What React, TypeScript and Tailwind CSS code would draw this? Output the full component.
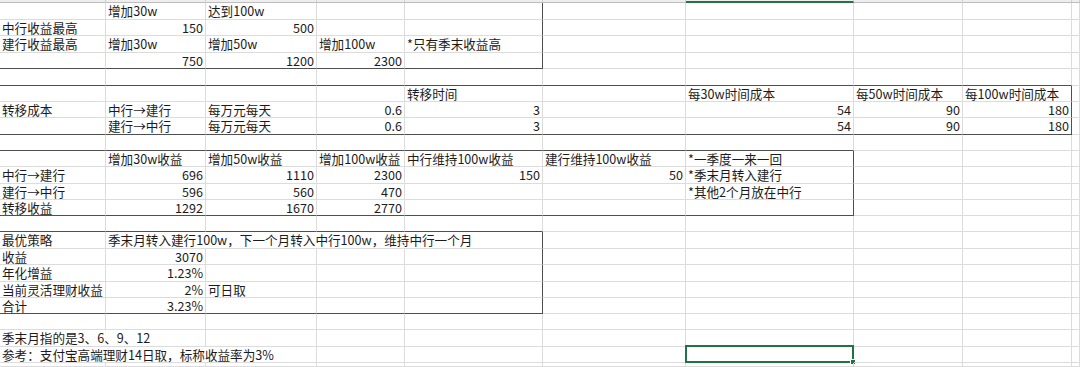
type Cell = { t?: string; r?: boolean; span?: number; sel?: boolean }

const font = { fontFamily: '"Noto Sans CJK SC", "Liberation Sans", sans-serif' }

const colW = [106, 100, 111, 88, 138, 143, 168, 109, 109, 8]

const L = (t: string): Cell => ({ t })
const R = (t: string): Cell => ({ t, r: true })
const E: Cell = {}

// rows 1..23 of the sheet, header strip is drawn separately
const rows: Cell[][] = [
  [E, L('增加30w'), L('达到100w')],
  [L('中行收益最高'), R('150'), R('500')],
  [L('建行收益最高'), L('增加30w'), L('增加50w'), L('增加100w'), L('*只有季末收益高')],
  [E, R('750'), R('1200'), R('2300')],
  [],
  [E, E, E, E, L('转移时间'), E, L('每30w时间成本'), L('每50w时间成本'), L('每100w时间成本')],
  [L('转移成本'), L('中行→建行'), L('每万元每天'), R('0.6'), R('3'), E, R('54'), R('90'), R('180')],
  [E, L('建行→中行'), L('每万元每天'), R('0.6'), R('3'), E, R('54'), R('90'), R('180')],
  [],
  [E, L('增加30w收益'), L('增加50w收益'), L('增加100w收益'), L('中行维持100w收益'), L('建行维持100w收益'), L('*一季度一来一回')],
  [L('中行→建行'), R('696'), R('1110'), R('2300'), R('150'), R('50'), L('*季末月转入建行')],
  [L('建行→中行'), R('596'), R('560'), R('470'), E, E, L('*其他2个月放在中行')],
  [L('转移收益'), R('1292'), R('1670'), R('2770')],
  [],
  [L('最优策略'), { t: '季末月转入建行100w，下一个月转入中行100w，维持中行一个月', span: 4 }],
  [L('收益'), R('3070')],
  [L('年化增益'), R('1.23%')],
  [L('当前灵活理财收益'), R('2%'), L('可日取')],
  [L('合计'), R('3.23%')],
  [],
  [{ t: '季末月指的是3、6、9、12', span: 2 }],
  [{ t: '参考：支付宝高端理财14日取，标称收益率为3%', span: 3 }, E, E, E, { sel: true }],
  [],
]

const spanCls: Record<number, string> = {
  1: '',
  2: 'col-span-2',
  3: 'col-span-3',
  4: 'col-span-4',
}

function rightDark(r: number, c: number) {
  return (
    (r >= 1 && r <= 4 && c === 4) ||
    (r >= 6 && r <= 8 && c === 8) ||
    (r >= 10 && r <= 13 && c === 6) ||
    (r >= 15 && r <= 19 && c === 4)
  )
}

function bottomDark(r: number, c: number) {
  return (
    (r === 4 && c <= 4) ||
    ((r === 5 || r === 8) && c <= 8) ||
    ((r === 9 || r === 13) && c <= 6) ||
    ((r === 14 || r === 19) && c <= 4)
  )
}

function SheetRow({ cells, r }: { cells: Cell[]; r: number }) {
  const out = []
  let c = 0
  let i = 0
  while (c < 10) {
    const cell = cells[i] ?? E
    const span = cell.span ?? 1
    const last = c + span - 1
    out.push(
      <div
        key={c}
        className={`relative flex items-center overflow-visible whitespace-nowrap border-r border-b px-[2px] pt-[1px] text-[12.6px] leading-none text-[#1b1b1b] ${spanCls[span]} ${
          cell.r ? 'justify-end' : 'justify-start'
        } ${rightDark(r, last) ? 'border-r-[#4f4f4f]' : 'border-r-[#dcdcdc]'} ${
          bottomDark(r, c) ? 'border-b-[#4f4f4f]' : 'border-b-[#dcdcdc]'
        }`}
      >
        {cell.t}
        {cell.sel && (
          <div className="absolute -top-[2px] -left-[1px] -right-[1px] -bottom-[1px] border-2 border-[#217346]">
            <div className="absolute -right-[4px] -bottom-[4px] h-[6px] w-[6px] border border-white bg-[#217346]" />
          </div>
        )}
      </div>
    )
    c += span
    i++
  }
  return <>{out}</>
}

export default function App() {
  return (
    <div className="h-[367px] w-[1080px] overflow-hidden bg-white" style={font}>
      <div className="grid grid-cols-[106px_100px_111px_88px_138px_143px_168px_109px_109px_8px] grid-rows-[3px_17px_16px_17px_16px_17px_16px_16px_17px_16px_16px_17px_16px_16px_16px_17px_16px_17px_16px_16px_16px_17px_16px_4px]">
        {colW.map((_, c) => (
          <div
            key={c}
            className={`border-r border-r-[#cfcfcf] bg-[#eeeeee] ${
              c === 6 ? 'border-b-2 border-b-[#217346]' : 'border-b border-b-[#bdbdbd]'
            }`}
          />
        ))}
        {rows.map((cells, i) => (
          <SheetRow key={i} cells={cells} r={i + 1} />
        ))}
      </div>
    </div>
  )
}
